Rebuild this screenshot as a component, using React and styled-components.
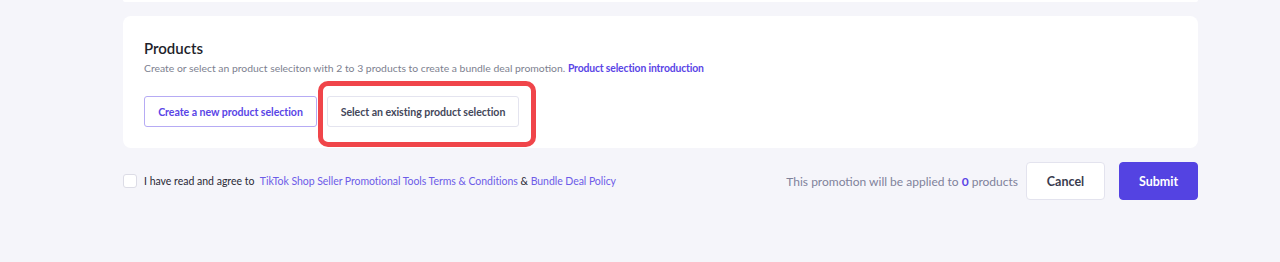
import React from "react";
import styled, { createGlobalStyle } from "styled-components";

const Global = createGlobalStyle`
  html, body { margin: 0; padding: 0; background: #f5f5fa; }
  body { font-family: "Lato", "Inter", sans-serif; -webkit-font-smoothing: antialiased; }
  * { box-sizing: border-box; }
`;

const Page = styled.div`
  width: 1280px;
  height: 262px;
  background: #f5f5fa;
  padding-left: 123px;
  overflow: hidden;
`;

const Column = styled.div`
  width: 1075px;
  display: flex;
  flex-direction: column;
`;

const PrevCard = styled.div`
  height: 2px;
  background: #ffffff;
  border-radius: 0 0 2px 2px;
`;

const Card = styled.section`
  margin-top: 14px;
  height: 132px;
  background: #ffffff;
  border-radius: 8px;
  padding: 21px 21px 0 21px;
  display: flex;
  flex-direction: column;
`;

const Title = styled.h2`
  margin: 0;
  font-size: 15px;
  line-height: 22px;
  font-weight: 600;
  color: #1f1f2b;
`;

const Desc = styled.p`
  margin: 1px 0 0;
  font-size: 10.4px;
  line-height: 16px;
  color: #7d7f8f;
`;

const Link = styled.a`
  color: ${(p) => (p.$bold ? "#5a45e6" : "#6d5ce8")};
  font-weight: ${(p) => (p.$bold ? 700 : 400)};
  letter-spacing: ${(p) => (p.$bold ? "-0.15px" : "-0.05px")};
  text-decoration: none;
`;

const ButtonRow = styled.div`
  margin-top: 20px;
  display: flex;
  align-items: center;
  gap: 10px;
`;

const Highlight = styled.div`
  position: relative;
  display: flex;
`;

const HighlightRing = styled.span`
  position: absolute;
  left: -9px;
  right: -17px;
  top: -15px;
  bottom: -20px;
  border: 5px solid #f0454a;
  border-radius: 10px;
  pointer-events: none;
`;

const OutlineButton = styled.button`
  height: 31px;
  width: ${(p) => p.$w}px;
  background: #ffffff;
  border: 1px solid ${(p) => (p.$primary ? "#b6abf4" : "#e4e4ef")};
  border-radius: 3px;
  font-family: inherit;
  font-size: 10.6px;
  font-weight: 700;
  letter-spacing: -0.05px;
  color: ${(p) => (p.$primary ? "#5a45e6" : "#44475a")};
  padding: 0;
  cursor: pointer;
`;

const Footer = styled.div`
  margin-top: 14px;
  display: flex;
  align-items: center;
  justify-content: space-between;
  height: 38px;
`;

const Agree = styled.label`
  display: flex;
  align-items: center;
  gap: 7px;
  font-size: 10.5px;
  color: #2a2a36;
  margin-top: -1px;
`;

const Checkbox = styled.span`
  width: 14px;
  height: 14px;
  border: 1px solid #dcdce6;
  border-radius: 3px;
  background: #ffffff;
`;

const Actions = styled.div`
  display: flex;
  align-items: center;
  gap: 14px;
`;

const Summary = styled.span`
  font-size: 12px;
  color: #80829a;
  margin-right: -6px;
  strong { color: #5a45e6; font-weight: 700; }
`;

const ActionButton = styled.button`
  width: 79px;
  height: 38px;
  border-radius: 4px;
  font-family: inherit;
  font-size: 12.5px;
  font-weight: 700;
  cursor: pointer;
  border: 1px solid ${(p) => (p.$primary ? "#5443e2" : "#e3e3ee")};
  background: ${(p) => (p.$primary ? "#5443e2" : "#ffffff")};
  color: ${(p) => (p.$primary ? "#ffffff" : "#3a3c4e")};
`;

export default function App() {
  return (
    <>
      <Global />
      <Page>
        <Column>
          <PrevCard />
          <Card>
            <Title>Products</Title>
            <Desc>
              Create or select an product seleciton with 2 to 3 products to create a bundle deal promotion.{" "}
              <Link $bold href="#">Product selection introduction</Link>
            </Desc>
            <ButtonRow>
              <OutlineButton $primary $w={173}>Create a new product selection</OutlineButton>
              <Highlight>
                <OutlineButton $w={192}>Select an existing product selection</OutlineButton>
                <HighlightRing />
              </Highlight>
            </ButtonRow>
          </Card>
          <Footer>
            <Agree>
              <Checkbox />
              <span>
                I have read and agree to&nbsp; <Link href="#">TikTok Shop Seller Promotional Tools Terms &amp; Conditions</Link>{" "}
                &amp; <Link href="#">Bundle Deal Policy</Link>
              </span>
            </Agree>
            <Actions>
              <Summary>
                This promotion will be applied to <strong>0</strong> products
              </Summary>
              <ActionButton>Cancel</ActionButton>
              <ActionButton $primary>Submit</ActionButton>
            </Actions>
          </Footer>
        </Column>
      </Page>
    </>
  );
}
